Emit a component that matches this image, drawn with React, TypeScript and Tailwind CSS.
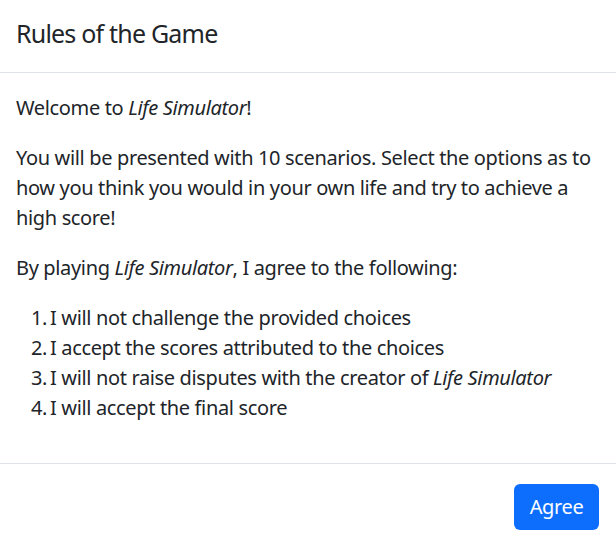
const rules: React.ReactNode[] = [
  "I will not challenge the provided choices",
  "I accept the scores attributed to the choices",
  <>
    I will not raise disputes with the creator of <em>Life Simulator</em>
  </>,
  "I will accept the final score",
]

export default function App() {
  return (
    <div
      className="w-[616px] h-[547px] overflow-hidden bg-white text-[#212529] tracking-[-0.35px]"
      style={{ fontFamily: "'Noto Sans', sans-serif" }}
    >
      {/* Header */}
      <div className="h-[73px] border-b border-[#dee2e6] px-4 pt-[14.5px]">
        <h5 className="text-[25px] leading-[37.5px] font-normal tracking-[-0.8px]">Rules of the Game</h5>
      </div>

      {/* Body */}
      <div className="px-4 py-5 text-[20px] leading-[30px]">
        <p className="mb-5">
          Welcome to <em>Life Simulator</em>!
        </p>
        <p className="mb-5">
          You will be presented with 10 scenarios. Select the options as to how you think you would in your own life
          and try to achieve a high score!
        </p>
        <p className="mb-5">
          By playing <em>Life Simulator</em>, I agree to the following:
        </p>
        <ol className="mb-5">
          {rules.map((r, i) => (
            <li key={i} className="flex gap-[3px]">
              <span className="w-[31px] shrink-0 text-right">{i + 1}.</span>
              <span>{r}</span>
            </li>
          ))}
        </ol>
      </div>

      {/* Footer */}
      <div className="border-t border-[#dee2e6] flex justify-end pt-5 pr-[17px]">
        <button className="w-[85px] h-[46px] bg-[#0d6efd] text-white text-[20px] leading-[30px] rounded-[6px] flex items-center justify-center">
          Agree
        </button>
      </div>
    </div>
  )
}
